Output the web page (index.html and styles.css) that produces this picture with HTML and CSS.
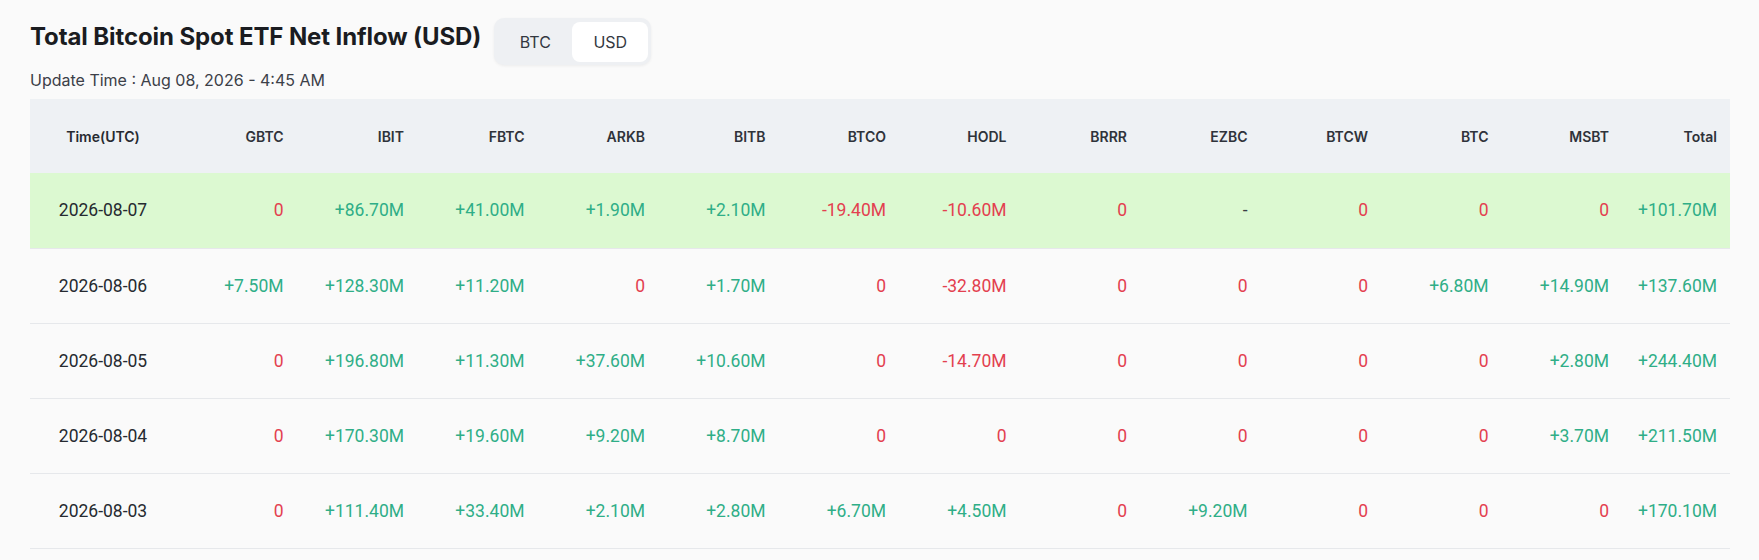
FILE: index.html
```html
<!DOCTYPE html>
<html lang="en">
<head>
<meta charset="utf-8">
<title>Total Bitcoin Spot ETF Net Inflow (USD)</title>
<link rel="stylesheet" href="styles.css">
</head>
<body>
<div class="page">
  <div class="head">
    <h1 class="title">Total Bitcoin Spot ETF Net Inflow (USD)</h1>
    <div class="toggle">
      <button class="tbtn">BTC</button>
      <button class="tbtn active">USD</button>
    </div>
  </div>
  <div class="update">Update Time : Aug 08, 2026 - 4:45 AM</div>
  <table class="etf">
    <colgroup>
      <col class="c-date">
      <col class="c-num"><col class="c-num"><col class="c-num"><col class="c-num">
      <col class="c-num"><col class="c-num"><col class="c-num"><col class="c-num">
      <col class="c-num"><col class="c-num"><col class="c-num"><col class="c-num">
      <col class="c-total">
    </colgroup>
    <thead>
      <tr>
        <th class="date">Time(UTC)</th>
        <th>GBTC</th><th>IBIT</th><th>FBTC</th><th>ARKB</th><th>BITB</th><th>BTCO</th>
        <th>HODL</th><th>BRRR</th><th>EZBC</th><th>BTCW</th><th>BTC</th><th>MSBT</th><th>Total</th>
      </tr>
    </thead>
    <tbody>
      <tr class="hl">
        <td class="date">2026-08-07</td>
        <td class="neg">0</td><td class="pos">+86.70M</td><td class="pos">+41.00M</td><td class="pos">+1.90M</td>
        <td class="pos">+2.10M</td><td class="neg">-19.40M</td><td class="neg">-10.60M</td><td class="neg">0</td>
        <td class="nil">-</td><td class="neg">0</td><td class="neg">0</td><td class="neg">0</td><td class="pos">+101.70M</td>
      </tr>
      <tr>
        <td class="date">2026-08-06</td>
        <td class="pos">+7.50M</td><td class="pos">+128.30M</td><td class="pos">+11.20M</td><td class="neg">0</td>
        <td class="pos">+1.70M</td><td class="neg">0</td><td class="neg">-32.80M</td><td class="neg">0</td>
        <td class="neg">0</td><td class="neg">0</td><td class="pos">+6.80M</td><td class="pos">+14.90M</td><td class="pos">+137.60M</td>
      </tr>
      <tr>
        <td class="date">2026-08-05</td>
        <td class="neg">0</td><td class="pos">+196.80M</td><td class="pos">+11.30M</td><td class="pos">+37.60M</td>
        <td class="pos">+10.60M</td><td class="neg">0</td><td class="neg">-14.70M</td><td class="neg">0</td>
        <td class="neg">0</td><td class="neg">0</td><td class="neg">0</td><td class="pos">+2.80M</td><td class="pos">+244.40M</td>
      </tr>
      <tr>
        <td class="date">2026-08-04</td>
        <td class="neg">0</td><td class="pos">+170.30M</td><td class="pos">+19.60M</td><td class="pos">+9.20M</td>
        <td class="pos">+8.70M</td><td class="neg">0</td><td class="neg">0</td><td class="neg">0</td>
        <td class="neg">0</td><td class="neg">0</td><td class="neg">0</td><td class="pos">+3.70M</td><td class="pos">+211.50M</td>
      </tr>
      <tr>
        <td class="date">2026-08-03</td>
        <td class="neg">0</td><td class="pos">+111.40M</td><td class="pos">+33.40M</td><td class="pos">+2.10M</td>
        <td class="pos">+2.80M</td><td class="pos">+6.70M</td><td class="pos">+4.50M</td><td class="neg">0</td>
        <td class="pos">+9.20M</td><td class="neg">0</td><td class="neg">0</td><td class="neg">0</td><td class="pos">+170.10M</td>
      </tr>
    </tbody>
  </table>
</div>
</body>
</html>
```

FILE: styles.css
```css
* { box-sizing: border-box; }

html, body {
  margin: 0;
  padding: 0;
  background: #fafafa;
}

body {
  font-family: Inter, "Noto Sans", sans-serif;
  color: #1e2026;
}

.page {
  padding: 18px 29px 0 30px;
}

.head {
  display: flex;
  align-items: flex-start;
  gap: 13px;
}

.title {
  margin: 4px 0 0 0;
  font-size: 24px;
  line-height: 30px;
  font-weight: 700;
  color: #1a1c21;
  letter-spacing: -0.1px;
}

.toggle {
  display: flex;
  padding: 4px 3px 3px 4px;
  background: #eef0f3;
  border-radius: 10px;
  box-shadow: 0 1px 3px rgba(0, 0, 0, 0.06);
}

.tbtn {
  height: 40px;
  min-width: 74px;
  padding: 0 20px;
  border: 0;
  border-radius: 8px;
  background: transparent;
  font-family: Inter, "Noto Sans", sans-serif;
  font-size: 16px;
  color: #333840;
  cursor: pointer;
}

.tbtn.active {
  min-width: 76px;
  background: #ffffff;
}

.update {
  margin: 5px 0 9px 0;
  font-size: 16px;
  line-height: 20px;
  color: #3c4048;
}

.etf {
  width: 1700px;
  table-layout: fixed;
  border-collapse: collapse;
}

.c-date { width: 146px; }
.c-num { width: 120.5px; }
.c-total { width: 108px; }

.etf th {
  height: 74px;
  padding: 0 13px 0 0;
  background: #eef1f4;
  font-family: Inter, "Noto Sans", sans-serif;
  font-size: 14px;
  font-weight: 600;
  color: #2f333a;
  text-align: right;
  white-space: nowrap;
}

.etf td {
  height: 75px;
  padding: 0 13px 0 0;
  border-bottom: 1px solid #e6e8eb;
  font-family: Roboto, "Noto Sans", sans-serif;
  font-size: 17.5px;
  font-weight: 400;
  text-align: right;
  white-space: nowrap;
}

.etf .date {
  text-align: center;
  padding: 0;
  color: #262a30;
}

.etf tr.hl td {
  background: #dcf9d1;
}

.pos { color: #2fae87; }
.neg { color: #e3404f; }
.nil { color: #3a3e45; }
```
